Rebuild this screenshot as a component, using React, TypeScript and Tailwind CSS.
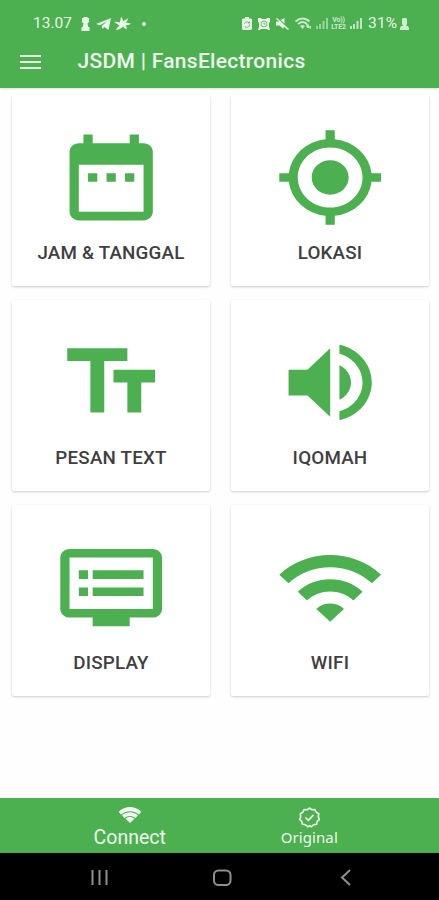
import type { ReactNode } from 'react'

const menuItems = [
  {
    label: 'JAM & TANGGAL',
    path: 'M9 11H7v2h2v-2zm4 0h-2v2h2v-2zm4 0h-2v2h2v-2zm2-7h-1V2h-2v2H8V2H6v2H5c-1.1 0-2 .9-2 2v14c0 1.1.9 2 2 2h14c1.1 0 2-.9 2-2V6c0-1.1-.9-2-2-2zm0 16H5V9h14v11z',
  },
  {
    label: 'LOKASI',
    path: 'M12 8c-2.21 0-4 1.79-4 4s1.79 4 4 4 4-1.79 4-4-1.79-4-4-4zm8.94 3A8.994 8.994 0 0 0 13 3.06V1h-2v2.06A8.994 8.994 0 0 0 3.06 11H1v2h2.06A8.994 8.994 0 0 0 11 20.94V23h2v-2.06A8.994 8.994 0 0 0 20.94 13H23v-2h-2.06zM12 19c-3.87 0-7-3.13-7-7s3.13-7 7-7 7 3.13 7 7-3.13 7-7 7z',
  },
  {
    label: 'PESAN TEXT',
    path: 'M2.5 4v3h5v12h3V7h5V4h-13zm19 5h-9v3h3v7h3v-7h3V9z',
  },
  {
    label: 'IQOMAH',
    path: 'M3 9v6h4.1l4.9 5V4L7.1 9H3zm13.5 3c0-1.77-1.02-3.29-2.5-4.03v8.05c1.48-.73 2.5-2.25 2.5-4.02zM14 3.23v2.06c2.89.86 5 3.54 5 6.71s-2.11 5.85-5 6.71v2.06c4.01-.91 7-4.49 7-8.77s-2.99-7.86-7-8.77z',
  },
  {
    label: 'DISPLAY',
    path: 'M21 3H3c-1.1 0-2 .9-2 2v12c0 1.1.9 2 2 2h5v2h8v-2h5c1.1 0 2-.9 2-2V5c0-1.1-.9-2-2-2zm0 14H3V5h18v12zm-2-9H8v2h11V8zm0 4H8v2h11v-2zM7 8H5v2h2V8zm0 4H5v2h2v-2z',
  },
  {
    label: 'WIFI',
    path: 'M1 9l2 2c4.97-4.97 13.03-4.97 18 0l2-2C16.93 2.93 7.08 2.93 1 9zm8 8l3 3 3-3c-1.65-1.66-4.34-1.66-6 0zm-4-4l2 2c2.76-2.76 7.24-2.76 10 0l2-2C15.14 9.14 8.87 9.14 5 13z',
  },
]

function StatusBar() {
  return (
    <div className="flex h-[47px] items-center pl-[33px] pr-[30px] text-[15.5px] text-[#e9f7e9]">
      <span className="w-[48px]">13.07</span>
      <svg className="h-[14px] w-[9px]" viewBox="0 0 9 14" fill="currentColor">
        <path d="M2.500 0h4v1H8v4L6.500 6.500l.8 3.500H8.500v4H.5v-4h1.200l.8-3.500L1 5V1h1.500z" />
      </svg>
      <svg className="ml-[6px] h-[12px] w-[15px]" viewBox="0 0 15 12" fill="currentColor">
        <path d="M0 6 15 0l-2.500 12-4-3-2 2-.8-3L11.500 3 4 7.200z" />
      </svg>
      <svg className="ml-[3px] h-[13px] w-[17px]" viewBox="0 0 17 13" fill="currentColor">
        <path d="M7 0c1.500 1 2 2.500 2 4.200L14 1.500c-.2 1.800-1 3-2.500 4L17 6.500c-1.500 1.400-3.200 1.800-5 1.500l1 4c-1.800-.2-3-1-4-2.500-1.500 2-3.500 3-7 3.500.8-2 2-3.300 3.500-4.500L0 5c2-.6 4-.4 5.800.5z" />
      </svg>
      <span className="ml-[11px] size-[4px] rounded-full bg-current" />
      <div className="ml-auto flex items-center">
        <svg className="h-[13px] w-[10px]" viewBox="0 0 10 13">
          <path d="M3 0h4v1.500h2l1 1V12l-1 1H1l-1-1V2.500l1-1h2z" fill="currentColor" />
          <path d="M2.500 6.800a2.600 2.600 0 0 1 4.500-1M7.500 7.500a2.600 2.600 0 0 1-4.500 2M7.500 4.500V6H6" fill="none" stroke="#4caf50" strokeWidth=".8" />
        </svg>
        <svg className="ml-[6px] h-[12px] w-[12px]" viewBox="0 0 12 12">
          <path d="M0 0h3l1 1h4l1-1h3v4l-1 1v4l1 3h-2L9 11H3l-1 1H0l1-3V5L0 4z" fill="currentColor" />
          <path d="M3 6a3 3 0 1 0 6 0 3 3 0 1 0-6 0M6 4.500V6h1.500" fill="none" stroke="#4caf50" strokeWidth=".8" />
        </svg>
        <svg className="ml-[6px] h-[12px] w-[13px]" viewBox="0 0 13 12" fill="currentColor">
          <path d="m1 0 12 11-1 1L7.500 8.500v2.500L3.500 7.500H0V3.500h3.500L0 1zM4.500 2 8.500 0v5.500z" />
        </svg>
        <svg className="ml-[6px] h-[13px] w-[17px] opacity-80" viewBox="0 0 17 13">
          <path d="M.5 4.500c4-4 10-4 14 0M3 7c3-2.800 6-2.800 9 0" fill="none" stroke="currentColor" strokeWidth="1.900" />
          <path d="M5 9q2.500-2 5 0L7.500 12zM11 8l1.500-1.500L14 8v3h-2zm3 1h2v2l-1 1.500z" fill="currentColor" />
        </svg>
        <SignalBars className="ml-[4px] opacity-50" />
        <span className="ml-[2px] flex h-[14px] w-[17px] flex-col text-center text-[7px] font-bold leading-[7px] tracking-[-0.200px] opacity-80">
          <span>Vo))</span>
          <span>LTE2</span>
        </span>
        <SignalBars className="ml-[3px] opacity-75" />
        <span className="ml-[6px] w-[31px] tracking-[0.2px]">31%</span>
        <svg className="ml-px h-[12px] w-[9px]" viewBox="0 0 9 12" fill="currentColor">
          <path d="M3 0h3l1 1v5L6 8h2l1 2v2H0v-2l1-2h2L2 6V1z" opacity=".85" />
        </svg>
      </div>
    </div>
  )
}

function SignalBars({ className }: { className: string }) {
  return (
    <svg className={`h-[11px] w-[12px] ${className}`} viewBox="0 0 12 11" fill="currentColor">
      <path d="M0 8h2v3H0zm3-2h2v5H3zm3.500-3h2v8h-2zM10 0h2v11h-2z" />
    </svg>
  )
}

function MenuCard({ label, path }: { label: string; path: string }) {
  return (
    <button
      type="button"
      className="flex h-[191px] flex-col items-center rounded-[2px] bg-white pt-[30.500px] shadow-[0_1px_2.500px_rgba(0,0,0,0.2)]"
    >
      <svg
        className="h-[103px] w-[111px] shrink-0"
        viewBox="0.070 0 24 24"
        preserveAspectRatio="none"
        fill="#4caf50"
      >
        <path d={path} />
      </svg>
      <span className="mt-[12.500px] whitespace-nowrap text-[18.800px] font-medium leading-6 tracking-[0.200px] text-[#3f3f41]">
        {label}
      </span>
    </button>
  )
}

function NavTab({ icon, children }: { icon: ReactNode; children: ReactNode }) {
  return (
    <button type="button" className="flex flex-col items-center text-[#f0faf0]">
      {icon}
      {children}
    </button>
  )
}

export default function App() {
  return (
    <div className="flex h-[900px] w-full flex-col overflow-hidden bg-[#fefefe] font-['Roboto',sans-serif]">
      <header className="z-10 h-[88px] shrink-0 bg-[#4caf50] shadow-[0_1px_2px_rgba(0,0,0,0.12)]">
        <StatusBar />
        <div className="flex h-[30px] items-center pl-[20px]">
          <svg className="h-[14px] w-[21px]" viewBox="0 0 21 14" fill="#e6f5e6">
            <path d="M0 0h21v2H0zM0 6h21v2H0zM0 12h21v2H0z" />
          </svg>
          <h1 className="ml-[36.500px] whitespace-nowrap text-[21px] font-medium tracking-[0.300px] text-[#f0faf0]">
            JSDM | FansElectronics
          </h1>
        </div>
      </header>

      <main className="grid flex-1 auto-rows-[191px] grid-cols-[198px_198px] content-start gap-x-[21px] gap-y-[14px] pl-[12px] pt-[7px]">
        {menuItems.map((item) => (
          <MenuCard key={item.label} {...item} />
        ))}
      </main>

      <nav className="flex h-[55px] shrink-0 bg-[#4caf50] px-[40px]">
        <div className="flex w-[180px] justify-center pt-[9px]">
          <NavTab
            icon={
              <svg className="h-[16px] w-[24px]" viewBox="0 0 24 17" fill="currentColor">
                <path d="M0 5C7-1.600 17-1.600 24 5l-2.400 3C16 3.200 8 3.200 2.400 8z" />
                <path d="M3.400 8.800c5-4.400 12.200-4.400 17.200 0l-2.700 3c-3.500-3-8.300-3-11.800 0z" />
                <path d="M7.200 12.500c2.800-2.400 6.800-2.400 9.600 0L12 17z" />
              </svg>
            }
          >
            <span className="text-[19.500px] leading-[29px]">Connect</span>
          </NavTab>
        </div>
        <div className="flex w-[180px] justify-center pt-[9px]">
          <NavTab
            icon={
              <svg
                className="size-[21px]"
                viewBox="0 0 22 22"
                fill="none"
                stroke="currentColor"
                strokeWidth="1.700"
                strokeLinejoin="round"
              >
                <path d="m11 1.200 2.600 1.700 3.100-.2 1.300 2.800 2.700 1.600-.5 3.100 1.200 2.800-2.300 2.100-.7 3-3.100.5-2.300 2.100-2-1.100-2 1.100-2.300-2.100-3.100-.5-.7-3L.6 13l1.200-2.800-.5-3.100L4 5.500l1.300-2.800 3.100.2z" />
                <path d="m6.800 11 3 3L15.200 8.200" />
              </svg>
            }
          >
            <span className="font-['Noto_Sans',sans-serif] text-[15px] leading-[19px] tracking-[0.100px]">
              Original
            </span>
          </NavTab>
        </div>
      </nav>

      <div className="h-[47px] shrink-0 bg-black">
        <svg className="h-[47px] w-[439px]" viewBox="0 0 439 47" fill="none" stroke="#8f8f8f" strokeWidth="2">
          <path d="M92.500 17v15M99.500 17v15M106.500 17v15" />
          <rect x="214" y="17.500" width="16.500" height="14.500" rx="4.500" />
          <path d="m350 17-8 7.500 8 7.500" />
        </svg>
      </div>
    </div>
  )
}
